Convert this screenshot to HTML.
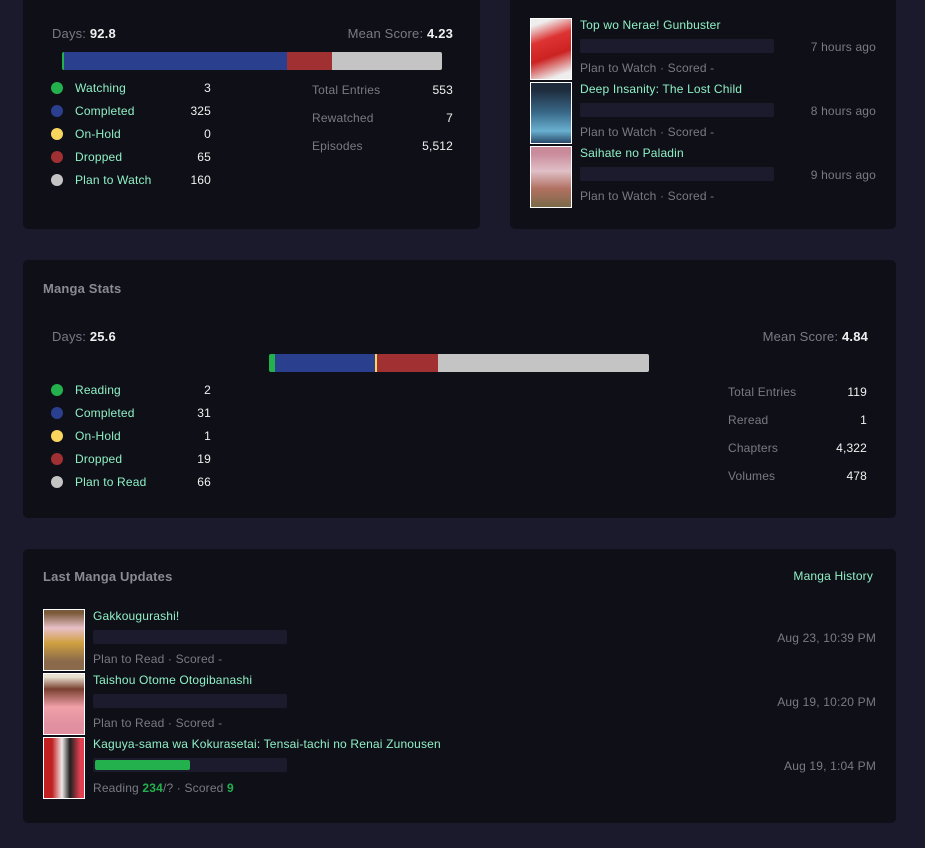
<!DOCTYPE html>
<html><head><meta charset="utf-8"><style>
*{margin:0;padding:0;box-sizing:border-box}
body{width:925px;height:848px;background:#1a1a2c;font-family:"Liberation Sans","DejaVu Sans",sans-serif;font-size:12px;letter-spacing:0.17px;color:#7a7a82;position:relative;overflow:hidden}
.card{position:absolute;background:#0f0f18;border-radius:5px}
.a{position:absolute;white-space:nowrap;line-height:14px}
.t{color:#8ff0c4}
.w{color:#f0f0f0}
.b{font-weight:bold}
.r{text-align:right}
.dot{position:absolute;width:12px;height:12px;border-radius:50%}
.bar{position:absolute;height:18px;display:flex;border-radius:2px;overflow:hidden}
.pb{position:absolute;width:194px;height:14px;background:#1c1b2e;border-radius:2px}
.img{position:absolute;width:42px;height:62px;border:1px solid #fff}
.h{font-size:13px;font-weight:bold;color:#8a8a92}
</style></head><body>

<div class="card" style="left:23px;top:-6px;width:457px;height:235px"></div>
<div class="card" style="left:510px;top:-6px;width:386px;height:235px"></div>
<div class="card" style="left:23px;top:260px;width:873px;height:258px"></div>
<div class="card" style="left:23px;top:549px;width:873px;height:274px"></div>

<div class="a" style="left:52px;top:27px;font-size:13px">Days: <span class="w b">92.8</span></div>
<div class="a r" style="right:472px;top:27px;font-size:13px">Mean Score: <span class="w b">4.23</span></div>
<div class="bar" style="left:62px;top:52px;width:380px"><div style="width:2px;background:#22b14c"></div><div style="width:223px;background:#2b3f8f"></div><div style="width:45px;background:#a13033"></div><div style="flex:1;background:#c4c4c4"></div></div>

<div class="dot" style="left:51px;top:82px;background:#22b14c"></div><div class="a t" style="left:75px;top:81px">Watching</div><div class="a w r" style="right:714px;top:81px">3</div>
<div class="dot" style="left:51px;top:105px;background:#2b3f8f"></div><div class="a t" style="left:75px;top:104px">Completed</div><div class="a w r" style="right:714px;top:104px">325</div>
<div class="dot" style="left:51px;top:128px;background:#f9d55e"></div><div class="a t" style="left:75px;top:127px">On-Hold</div><div class="a w r" style="right:714px;top:127px">0</div>
<div class="dot" style="left:51px;top:151px;background:#a13033"></div><div class="a t" style="left:75px;top:150px">Dropped</div><div class="a w r" style="right:714px;top:150px">65</div>
<div class="dot" style="left:51px;top:174px;background:#c4c4c4"></div><div class="a t" style="left:75px;top:173px">Plan to Watch</div><div class="a w r" style="right:714px;top:173px">160</div>

<div class="a" style="left:312px;top:83px">Total Entries</div><div class="a w r" style="right:472px;top:83px">553</div>
<div class="a" style="left:312px;top:111px">Rewatched</div><div class="a w r" style="right:472px;top:111px">7</div>
<div class="a" style="left:312px;top:139px">Episodes</div><div class="a w r" style="right:472px;top:139px">5,512</div>

<div class="img" style="left:530px;top:18px;background:linear-gradient(160deg,#eee 10%,#d33 35%,#c22 60%,#eee 90%)"></div>
<div class="a t" style="left:580px;top:18px">Top wo Nerae! Gunbuster</div>
<div class="pb" style="left:580px;top:39px"></div>
<div class="a r" style="right:49px;top:40px">7 hours ago</div>
<div class="a" style="left:580px;top:61px">Plan to Watch · Scored -</div>

<div class="img" style="left:530px;top:82px;background:linear-gradient(180deg,#1d2a3a 10%,#3a6a8a 50%,#6ab0d0 80%,#2a4a6a)"></div>
<div class="a t" style="left:580px;top:82px">Deep Insanity: The Lost Child</div>
<div class="pb" style="left:580px;top:103px"></div>
<div class="a r" style="right:49px;top:104px">8 hours ago</div>
<div class="a" style="left:580px;top:125px">Plan to Watch · Scored -</div>

<div class="img" style="left:530px;top:146px;background:linear-gradient(180deg,#c98a9a 10%,#e0c0c8 40%,#b07060 70%,#7a6a4a)"></div>
<div class="a t" style="left:580px;top:146px">Saihate no Paladin</div>
<div class="pb" style="left:580px;top:167px"></div>
<div class="a r" style="right:49px;top:168px">9 hours ago</div>
<div class="a" style="left:580px;top:189px">Plan to Watch · Scored -</div>

<div class="a h" style="left:43px;top:282px">Manga Stats</div>
<div class="a" style="left:52px;top:330px;font-size:13px">Days: <span class="w b">25.6</span></div>
<div class="a r" style="right:57px;top:330px;font-size:13px">Mean Score: <span class="w b">4.84</span></div>
<div class="bar" style="left:269px;top:354px;width:380px"><div style="width:6px;background:#22b14c"></div><div style="width:100px;background:#2b3f8f"></div><div style="width:2px;background:#f9d55e"></div><div style="width:61px;background:#a13033"></div><div style="flex:1;background:#c4c4c4"></div></div>

<div class="dot" style="left:51px;top:384px;background:#22b14c"></div><div class="a t" style="left:75px;top:383px">Reading</div><div class="a w r" style="right:714px;top:383px">2</div>
<div class="dot" style="left:51px;top:407px;background:#2b3f8f"></div><div class="a t" style="left:75px;top:406px">Completed</div><div class="a w r" style="right:714px;top:406px">31</div>
<div class="dot" style="left:51px;top:430px;background:#f9d55e"></div><div class="a t" style="left:75px;top:429px">On-Hold</div><div class="a w r" style="right:714px;top:429px">1</div>
<div class="dot" style="left:51px;top:453px;background:#a13033"></div><div class="a t" style="left:75px;top:452px">Dropped</div><div class="a w r" style="right:714px;top:452px">19</div>
<div class="dot" style="left:51px;top:476px;background:#c4c4c4"></div><div class="a t" style="left:75px;top:475px">Plan to Read</div><div class="a w r" style="right:714px;top:475px">66</div>

<div class="a" style="left:728px;top:385px">Total Entries</div><div class="a w r" style="right:58px;top:385px">119</div>
<div class="a" style="left:728px;top:413px">Reread</div><div class="a w r" style="right:58px;top:413px">1</div>
<div class="a" style="left:728px;top:441px">Chapters</div><div class="a w r" style="right:58px;top:441px">4,322</div>
<div class="a" style="left:728px;top:469px">Volumes</div><div class="a w r" style="right:58px;top:469px">478</div>

<div class="a h" style="left:43px;top:570px">Last Manga Updates</div>
<div class="a t" style="right:52px;top:569px">Manga History</div>

<div class="img" style="left:43px;top:609px;background:linear-gradient(180deg,#7a5a3a 5%,#e8c0c8 30%,#d0a040 55%,#8a6a4a 85%)"></div>
<div class="a t" style="left:93px;top:609px">Gakkougurashi!</div>
<div class="pb" style="left:93px;top:630px"></div>
<div class="a r" style="right:49px;top:631px">Aug 23, 10:39 PM</div>
<div class="a" style="left:93px;top:652px">Plan to Read · Scored -</div>

<div class="img" style="left:43px;top:673px;background:linear-gradient(180deg,#e8e0d0 5%,#7a4030 25%,#f0a0a8 55%,#e090a0 85%)"></div>
<div class="a t" style="left:93px;top:673px">Taishou Otome Otogibanashi</div>
<div class="pb" style="left:93px;top:694px"></div>
<div class="a r" style="right:49px;top:695px">Aug 19, 10:20 PM</div>
<div class="a" style="left:93px;top:716px">Plan to Read · Scored -</div>

<div class="img" style="left:43px;top:737px;background:linear-gradient(90deg,#c02020 20%,#f0e8e8 45%,#202020 65%,#e04050 90%)"></div>
<div class="a t" style="left:93px;top:737px">Kaguya-sama wa Kokurasetai: Tensai-tachi no Renai Zunousen</div>
<div class="pb" style="left:93px;top:758px"><div style="position:absolute;left:2px;top:2px;width:95px;height:10px;background:#22b14c;border-radius:2px"></div></div>
<div class="a r" style="right:49px;top:759px">Aug 19, 1:04 PM</div>
<div class="a" style="left:93px;top:781px">Reading <span class="b" style="color:#22b14c">234</span>/? · Scored <span class="b" style="color:#22b14c">9</span></div>

</body></html>
